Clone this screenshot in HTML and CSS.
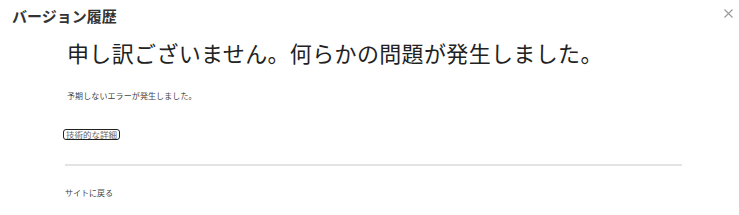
FILE: index.html
```html
<!DOCTYPE html>
<html lang="ja">

<head>
    <meta charset="UTF-8">
    <meta name="viewport" content="width=device-width, initial-scale=1.0">
    <title>バージョン履歴</title>
    <link rel="stylesheet" href="styles.css">
</head>

<body>
    <div class="header">
        <h2 class="panel-title">バージョン履歴</h2>
        <button class="close" type="button" aria-label="閉じる">
            <svg width="9" height="9" viewBox="0 0 9 9">
                <path d="M0.5 0.5 L8.5 8.5 M8.5 0.5 L0.5 8.5" stroke="#9a9a9a" stroke-width="1.1" fill="none" />
            </svg>
        </button>
    </div>
    <div class="error-box">
        <h1 class="error-title">申し訳ございません。何らかの問題が発生しました。</h1>
        <p class="error-msg">予期しないエラーが発生しました。</p>
        <button class="details" type="button">技術的な詳細</button>
        <hr class="divider">
        <a class="back" href="#">サイトに戻る</a>
    </div>
</body>

</html>
```

FILE: styles.css
```css
* {
    margin: 0;
    padding: 0;
    font-family: "Noto Sans CJK JP", "Noto Sans", sans-serif;
}

body {
    background-color: #fff;
    color: #333;
}

.header {
    display: flex;
    justify-content: space-between;
    align-items: center;
    padding: 7px 1px 0 12px;
    height: 18px;
}

.panel-title {
    font-size: 15px;
    font-weight: bold;
    line-height: 18px;
    color: #333;
}

.close {
    background: none;
    border-style: none;
    width: 20px;
    height: 18px;
    margin-top: -5px;
    display: flex;
    align-items: center;
    justify-content: center;
    cursor: pointer;
}

.error-box {
    margin-left: 65px;
    width: 617px;
}

.error-title {
    font-size: 22px;
    font-weight: normal;
    line-height: 26px;
    letter-spacing: 0.35px;
    color: #222;
    margin-top: 14px;
    padding-left: 2px;
}

.error-msg {
    font-size: 8px;
    line-height: 12px;
    letter-spacing: 0.1px;
    color: #444;
    margin-top: 25px;
    padding-left: 2px;
}

.details {
    display: block;
    font-size: 8.5px;
    line-height: 9px;
    color: #666;
    background: none;
    border: 1px solid #222;
    border-radius: 3px;
    padding: 0 2px;
    margin-top: 27px;
    margin-left: -2px;
}

.divider {
    border: none;
    border-top: 2px solid #e3e3e3;
    margin-top: 24px;
}

.back {
    display: block;
    font-size: 8px;
    line-height: 12px;
    color: #444;
    text-decoration: none;
    margin-top: 21px;
}
```
